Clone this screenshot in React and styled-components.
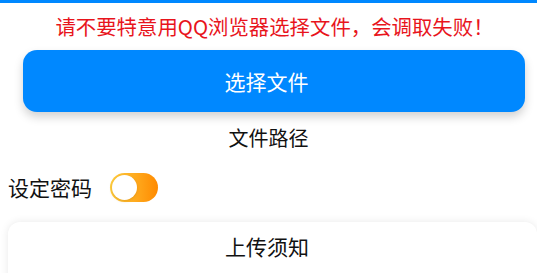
import styled, { createGlobalStyle } from "styled-components";

const GlobalStyle = createGlobalStyle`
  html, body {
    margin: 0;
    padding: 0;
    background: #ffffff;
    font-family: "Noto Sans CJK SC", "Noto Sans", sans-serif;
    overflow: hidden;
  }
`;

const Page = styled.div`
  display: flex;
  flex-direction: column;
`;

const TopBar = styled.div`
  height: 3px;
  background: #0088ff;
`;

const Warning = styled.div`
  margin-top: 9px;
  padding-left: 12px;
  height: 28px;
  line-height: 28px;
  text-align: center;
  color: #e8141c;
  font-size: 20.4px;
`;

const PickButton = styled.button`
  margin: 10px 12px 0 23px;
  padding: 0 15px 0 0;
  height: 62px;
  border: none;
  border-radius: 14px;
  background: #0088ff;
  color: #ffffff;
  font-family: inherit;
  font-size: 21px;
  box-shadow: 0 5px 10px rgba(0, 0, 0, 0.18);
`;

const PathText = styled.div`
  margin-top: 12px;
  height: 28px;
  line-height: 28px;
  text-align: center;
  color: #111111;
  font-size: 20px;
`;

const Row = styled.div`
  margin: 20px 0 0 8px;
  height: 30px;
  display: flex;
  align-items: center;
  gap: 18px;
`;

const Label = styled.span`
  font-size: 21px;
  color: #111111;
  line-height: 30px;
`;

const Switch = styled.div`
  position: relative;
  width: 48px;
  height: 29px;
  border-radius: 15px;
  background: linear-gradient(to right, #ffcf40, #ff8a00);
`;

const Knob = styled.div`
  position: absolute;
  top: 2px;
  left: ${(p) => (p.$on ? "21px" : "2px")};
  width: 25px;
  height: 25px;
  border-radius: 50%;
  background: #ffffff;
  box-shadow: 0 1px 3px rgba(180, 110, 0, 0.35);
`;

const Card = styled.div`
  margin: 20px 0 0 8px;
  padding-top: 10px;
  height: 60px;
  border-radius: 12px;
  background: #ffffff;
  box-shadow: 0 0 8px rgba(0, 0, 0, 0.09);
`;

const CardTitle = styled.div`
  padding-right: 11px;
  height: 28px;
  line-height: 28px;
  text-align: center;
  font-size: 21px;
  color: #111111;
`;

export default function App() {
  return (
    <Page>
      <GlobalStyle />
      <TopBar />
      <Warning>请不要特意用QQ浏览器选择文件，会调取失败！</Warning>
      <PickButton>选择文件</PickButton>
      <PathText>文件路径</PathText>
      <Row>
        <Label>设定密码</Label>
        <Switch>
          <Knob $on={false} />
        </Switch>
      </Row>
      <Card>
        <CardTitle>上传须知</CardTitle>
      </Card>
    </Page>
  );
}
